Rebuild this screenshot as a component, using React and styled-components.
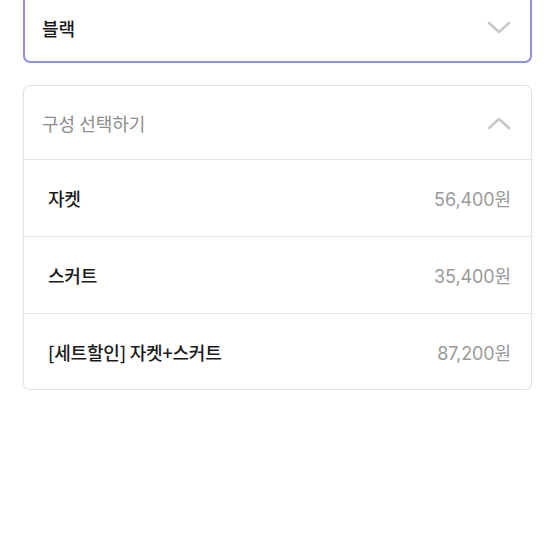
import React from "react";
import styled, { createGlobalStyle } from "styled-components";

const Global = createGlobalStyle`
  html, body { margin: 0; padding: 0; background: #fff; }
  body { font-family: "Noto Sans CJK KR", "Noto Sans", sans-serif; -webkit-font-smoothing: antialiased; }
`;

const Page = styled.div`
  width: 555px;
  padding: 0 23px 0 23px;
  box-sizing: border-box;
  margin-top: -11px;
  display: flex;
  flex-direction: column;
  gap: 22px;
`;

const Select = styled.div`
  height: 74px;
  box-sizing: border-box;
  border: 2px solid #9090dc;
  border-radius: 7px;
  display: flex;
  align-items: center;
  justify-content: space-between;
  padding: 0 19px 0 17px;
  padding-top: 4px;
`;

const SelectText = styled.span`
  font-size: 18px;
  font-weight: 500;
  color: #1a1a1a;
`;

const Panel = styled.div`
  border: 1px solid #e2e2e2;
  border-radius: 7px;
  box-shadow: 0 1px 2px rgba(0,0,0,0.06);
  display: flex;
  flex-direction: column;
  overflow: hidden;
`;

const PanelHeader = styled.div`
  height: 73px;
  display: flex;
  align-items: center;
  justify-content: space-between;
  padding: 0 20px 0 18px;
  border-bottom: 1px solid #e2e2e2;
`;

const HeaderText = styled.span`
  font-size: 18px;
  font-weight: 400;
  color: #8c8c8c;
`;

const Row = styled.div`
  height: ${(p) => (p.$last ? "75px" : "76px")};
  display: flex;
  align-items: center;
  justify-content: space-between;
  padding: 0 20px 0 24px;
  border-bottom: ${(p) => (p.$last ? "none" : "1px solid #e2e2e2")};
`;

const Name = styled.span`
  font-size: 18px;
  font-weight: 500;
  color: #1a1a1a;
  letter-spacing: -0.2px;
`;

const Price = styled.span`
  font-family: "Inter", "Noto Sans CJK KR", sans-serif;
  font-size: 18px;
  font-weight: 400;
  color: #9a9a9a;
  letter-spacing: -0.1px;
`;

const Chevron = ({ up }) => (
  <svg width="24" height="14" viewBox="0 0 24 14" fill="none">
    <path
      d={up ? "M2 12 L12 3 L22 12" : "M2 2 L12 11 L22 2"}
      stroke="#c8c8c8"
      strokeWidth="2.6"
      strokeLinecap="round"
      strokeLinejoin="round"
    />
  </svg>
);

const items = [
  { name: "자켓", price: "56,400원" },
  { name: "스커트", price: "35,400원" },
  { name: "[세트할인] 자켓+스커트", price: "87,200원" },
];

export default function App() {
  return (
    <>
      <Global />
      <Page>
        <Select>
          <SelectText>블랙</SelectText>
          <Chevron />
        </Select>
        <Panel>
          <PanelHeader>
            <HeaderText>구성 선택하기</HeaderText>
            <Chevron up />
          </PanelHeader>
          {items.map((it, i) => (
            <Row key={it.name} $last={i === items.length - 1}>
              <Name>{it.name}</Name>
              <Price>{it.price}</Price>
            </Row>
          ))}
        </Panel>
      </Page>
    </>
  );
}
